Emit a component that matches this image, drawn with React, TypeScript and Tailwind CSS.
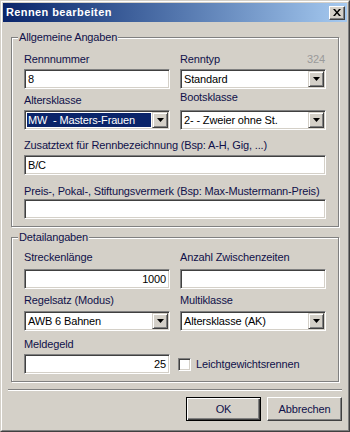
import React from "react";

// Windows classic dialog: "Rennen bearbeiten"

const face = "bg-[#d4d0c8]";
const sunken =
  "border border-t-[#808080] border-l-[#808080] border-r-white border-b-white shadow-[inset_1px_1px_0_#404040,inset_-1px_-1px_0_#d4d0c8] bg-white";

function Label({ children, className = "" }: { children: React.ReactNode; className?: string }) {
  return <div className={`h-[13px] leading-[13px] text-[#10104a] whitespace-nowrap ${className}`}>{children}</div>;
}

function TextBox({ value = "", right, className = "" }: { value?: string; right?: boolean; className?: string }) {
  return (
    <div className={`h-[20px] w-full ${sunken} flex items-center px-[3px] text-black ${right ? "justify-end" : ""} ${className}`}>
      <span className="leading-[13px]">{value}</span>
    </div>
  );
}

function ArrowButton() {
  return (
    <div className="w-[16px] h-[16px] border border-t-[#d4d0c8] border-l-[#d4d0c8] border-r-[#404040] border-b-[#404040] shadow-[inset_1px_1px_0_#fff,inset_-1px_-1px_0_#808080] bg-[#d4d0c8] flex items-center justify-center">
      <svg width="7" height="4" viewBox="0 0 7 4">
        <path d="M0 0h7L3.5 4z" fill="#000" />
      </svg>
    </div>
  );
}

function ComboBox({ value, selected, className = "" }: { value: string; selected?: boolean; className?: string }) {
  return (
    <div className={`h-[20px] w-full ${sunken} flex items-center p-[1px] ${className}`}>
      <div className="flex-1 h-full flex items-center p-px min-w-0">
        <div
          className={`h-full w-full flex items-center px-[1px] whitespace-pre ${
            selected ? "bg-[#0a246a] text-white" : "text-black"
          }`}
        >
          {value}
        </div>
      </div>
      <ArrowButton />
    </div>
  );
}

function Group({ title, children, className = "" }: { title: string; children: React.ReactNode; className?: string }) {
  return (
    <div
      className={`relative border border-[#808080] shadow-[1px_1px_0_#fff,inset_1px_1px_0_#fff] px-[12px] ${className}`}
    >
      <span className={`absolute -top-[7px] left-[6px] px-[1px] ${face} leading-[13px] text-[#10104a]`}>{title}</span>
      {children}
    </div>
  );
}

function Button({ label, isDefault }: { label: string; isDefault?: boolean }) {
  return isDefault ? (
    <div className="w-[75px] h-[24px] border border-black shadow-[inset_1px_1px_0_#fff,inset_-1px_-1px_0_#404040,inset_-2px_-2px_0_#808080] flex items-center justify-center text-[#10104a]">
      {label}
    </div>
  ) : (
    <div className="w-[75px] h-[24px] border border-t-white border-l-white border-r-[#404040] border-b-[#404040] shadow-[inset_-1px_-1px_0_#808080] flex items-center justify-center text-[#10104a]">
      {label}
    </div>
  );
}

export default function App() {
  return (
    <div
      className={`w-[350px] h-[432px] ${face} border border-t-[#d4d0c8] border-l-[#d4d0c8] border-r-[#404040] border-b-[#404040] text-[11px] tracking-[-0.15px] font-['Liberation_Sans',Arial,sans-serif]`}
    >
      <div className="h-full border border-t-white border-l-white border-r-[#808080] border-b-[#808080] p-px flex flex-col">
        {/* Title bar */}
        <div className="h-[19px] bg-gradient-to-r from-[#0a246a] to-[#a6caf0] flex items-center justify-between pl-[3px] pr-[2px]">
          <span className="text-white font-bold text-[11px] leading-[13px] tracking-[0.4px]">Rennen bearbeiten</span>
          <div className="w-[16px] h-[14px] border border-t-white border-l-white border-r-[#404040] border-b-[#404040] shadow-[inset_-1px_-1px_0_#808080] bg-[#d4d0c8] flex items-center justify-center">
            <svg width="8" height="7" viewBox="0 0 8 7">
              <path d="M0 0h2l2 2.5L6 0h2L5 3.5 8 7H6L4 4.5 2 7H0l3-3.5z" fill="#000" />
            </svg>
          </div>
        </div>

        {/* Body */}
        <div className="flex-1 px-[8px]">
          <Group title="Allgemeine Angaben" className="mt-[15px] pt-[15px] pb-[7px]">
            <div className="grid grid-cols-2 gap-x-[10px]">
              <div>
                <Label>Rennnummer</Label>
                <TextBox value="8" className="mt-[3px]" />
                <Label className="mt-[5px]">Altersklasse</Label>
                <ComboBox value="MW  - Masters-Frauen" selected className="mt-[3px]" />
              </div>
              <div>
                <div className="flex justify-between">
                  <Label>Renntyp</Label>
                  <span className="leading-[13px] text-[#9a9a9a] pr-[1px]">324</span>
                </div>
                <ComboBox value="Standard" className="mt-[3px]" />
                <Label className="mt-[2px]">Bootsklasse</Label>
                <ComboBox value="2- - Zweier ohne St." className="mt-[6px]" />
              </div>
            </div>
            <Label className="mt-[9px]">Zusatztext für Rennbezeichnung (Bsp: A-H, Gig, ...)</Label>
            <TextBox value="B/C" className="mt-[3px]" />
            <Label className="mt-[10px]">Preis-, Pokal-, Stiftungsvermerk (Bsp: Max-Mustermann-Preis)</Label>
            <TextBox className="mt-[1px]" />
          </Group>

          <Group title="Detailangaben" className="mt-[10px] pt-[13px] pb-[7px]">
            <div className="grid grid-cols-2 gap-x-[10px]">
              <div>
                <Label>Streckenlänge</Label>
                <TextBox value="1000" right className="mt-[5px]" />
                <Label className="mt-[5px]">Regelsatz (Modus)</Label>
                <ComboBox value="AWB 6 Bahnen" className="mt-[4px]" />
                <Label className="mt-[7px]">Meldegeld</Label>
                <TextBox value="25" right className="mt-[3px]" />
              </div>
              <div>
                <Label>Anzahl Zwischenzeiten</Label>
                <TextBox className="mt-[5px]" />
                <Label className="mt-[5px]">Multiklasse</Label>
                <ComboBox value="Altersklasse (AK)" className="mt-[4px]" />
                <div className="mt-[23px] h-[20px] flex items-center gap-[5px] -ml-[2px]">
                  <div className={`w-[13px] h-[13px] ${sunken}`} />
                  <span className="leading-[13px] text-[#10104a]">Leichtgewichtsrennen</span>
                </div>
              </div>
            </div>
          </Group>

          {/* Separator */}
          <div className="-mx-[3px] mt-[7px] h-[2px] border-t border-t-[#808080] border-b border-b-white" />

          <div className="flex justify-end gap-[6px] -mr-[3px] mt-[6px]">
            <Button label="OK" isDefault />
            <Button label="Abbrechen" />
          </div>
        </div>
      </div>
    </div>
  );
}
